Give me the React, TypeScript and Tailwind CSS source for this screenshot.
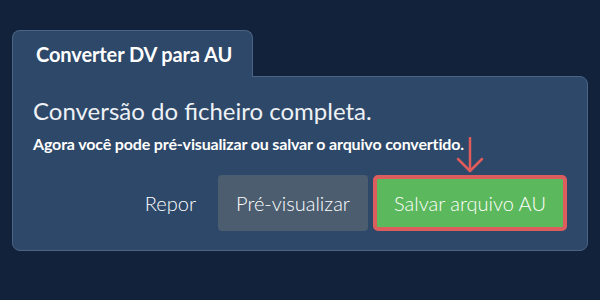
import React from "react";

export default function App() {
  return (
    <div
      className="w-[600px] h-[300px] bg-[#11223a] pt-[30px] pl-[12px]"
      style={{ fontFamily: "Lato, 'Noto Sans', sans-serif" }}
    >
      <div className="w-[576px]">
        <div className="relative z-10 -mb-px w-[241px] h-[47px] rounded-t-[8px] border border-b-0 border-[#4a6486] bg-[#2d4868] flex items-center pl-[23px]">
          <span className="text-[20px] font-bold text-white tracking-[-0.1px]">Converter DV para AU</span>
        </div>
        <div className="relative h-[175px] rounded-b-[8px] rounded-tr-[8px] border border-[#4a6486] bg-[#2d4868] pt-[19px] pl-[20px] pr-[20px] pb-[19px] flex flex-col">
          <h1 className="text-[24px] leading-[30px] text-[#eef1f5] font-normal">Conversão do ficheiro completa.</h1>
          <p className="mt-[7px] text-[16px] leading-[22px] font-bold text-white tracking-[-0.15px]">
            Agora você pode pré-visualizar ou salvar o arquivo convertido.
          </p>
          <div className="mt-auto flex items-center justify-end">
            <button className="text-[20px] font-light text-white mr-[22px]">Repor</button>
            <button className="h-[56px] w-[150px] rounded-[4px] bg-[#4b5d6f] text-[20px] font-light text-white">
              Pré-visualizar
            </button>
            <div className="relative ml-[5px]">
              <svg
                className="absolute left-[83px] top-[-38px]"
                width="28"
                height="36"
                viewBox="0 0 28 36"
                fill="none"
                stroke="#e05c5c"
                strokeWidth="2.5"
                strokeLinecap="round"
                strokeLinejoin="round"
              >
                <line x1="14" y1="1" x2="14" y2="34" />
                <polyline points="2,22 14,34 26,22" />
              </svg>
              <button className="h-[56px] w-[194px] rounded-[5px] border-[4px] border-[#dc5d5d] bg-[#5cb85c] text-[20px] font-light text-white">
                Salvar arquivo AU
              </button>
            </div>
          </div>
        </div>
      </div>
    </div>
  );
}
